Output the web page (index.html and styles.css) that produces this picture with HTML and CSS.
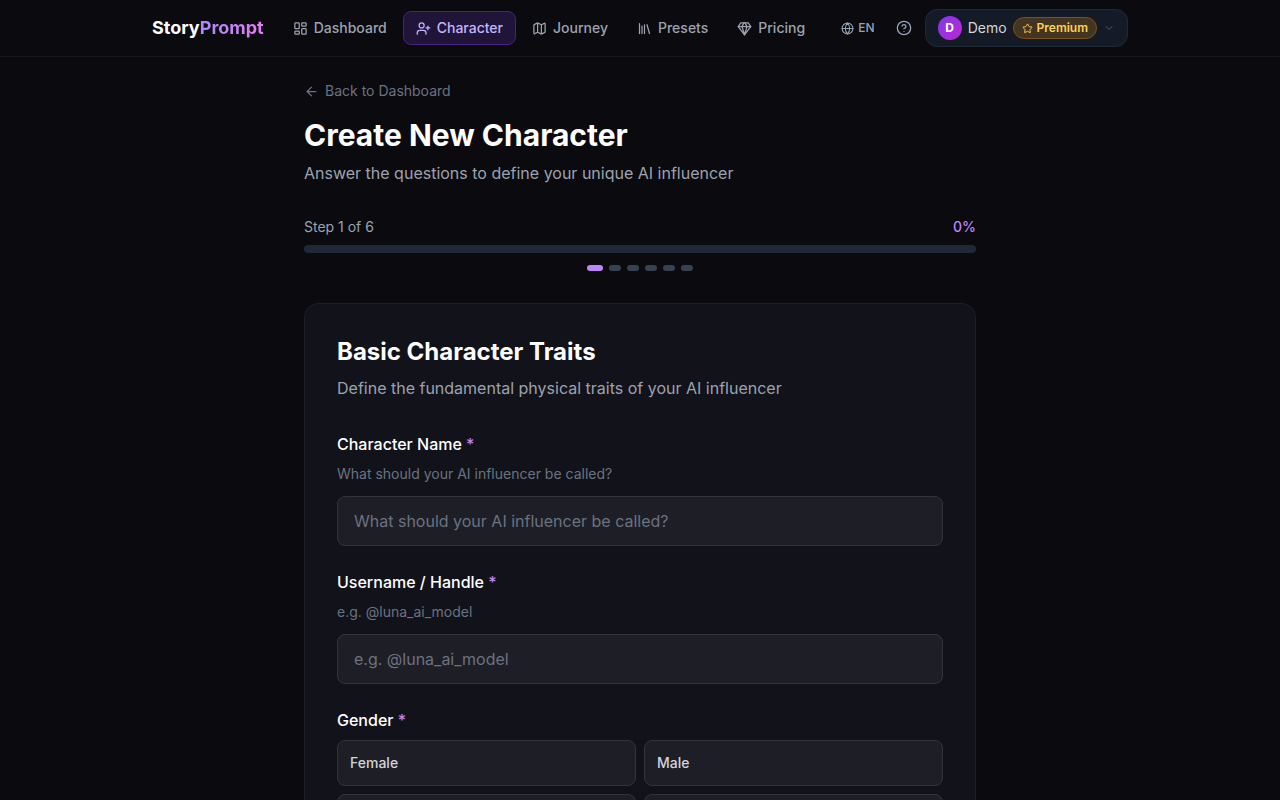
FILE: index.html
```
<!DOCTYPE html>
<html lang="en">

<head>
  <meta charset="UTF-8">
  <meta name="viewport" content="width=device-width, initial-scale=1.0">
  <title>Create New Character - StoryPrompt</title>
  <link rel="stylesheet" href="styles.css">
</head>

<body>
  <header class="topbar">
    <div class="topbar-inner">
      <a class="logo" href="#">Story<span>Prompt</span></a>

      <nav class="nav">
        <a class="nav-link" href="#">
          <svg class="icon" viewBox="0 0 24 24"><rect width="7" height="9" x="3" y="3" rx="1"/><rect width="7" height="5" x="14" y="3" rx="1"/><rect width="7" height="9" x="14" y="12" rx="1"/><rect width="7" height="5" x="3" y="16" rx="1"/></svg>
          Dashboard
        </a>
        <a class="nav-link active" href="#">
          <svg class="icon" viewBox="0 0 24 24"><path d="M16 21v-2a4 4 0 0 0-4-4H6a4 4 0 0 0-4 4v2"/><circle cx="9" cy="7" r="4"/><path d="M19 8v6M22 11h-6"/></svg>
          Character
        </a>
        <a class="nav-link" href="#">
          <svg class="icon" viewBox="0 0 24 24"><path d="M14.106 5.553a2 2 0 0 0 1.788 0l3.659-1.83A1 1 0 0 1 21 4.619v12.764a1 1 0 0 1-.553.894l-4.553 2.277a2 2 0 0 1-1.788 0l-4.212-2.106a2 2 0 0 0-1.788 0l-3.659 1.83A1 1 0 0 1 3 19.381V6.618a1 1 0 0 1 .553-.894l4.553-2.277a2 2 0 0 1 1.788 0zM15 5.764v15M9 3.236v15"/></svg>
          Journey
        </a>
        <a class="nav-link" href="#">
          <svg class="icon" viewBox="0 0 24 24"><path d="m16 6 4 14M12 6v14M8 8v12M4 4v16"/></svg>
          Presets
        </a>
        <a class="nav-link" href="#">
          <svg class="icon" viewBox="0 0 24 24"><path d="M6 3h12l4 6-10 13L2 9Z"/><path d="M11 3 8 9l4 13 4-13-3-6M2 9h20"/></svg>
          Pricing
        </a>
      </nav>

      <div class="tools">
        <button class="lang" type="button">
          <svg class="icon" viewBox="0 0 24 24"><circle cx="12" cy="12" r="10"/><path d="M12 2a14.5 14.5 0 0 0 0 20 14.5 14.5 0 0 0 0-20M2 12h20"/></svg>
          EN
        </button>
        <button class="help" type="button" aria-label="Help">
          <svg class="icon" viewBox="0 0 24 24"><circle cx="12" cy="12" r="10"/><path d="M9.09 9a3 3 0 0 1 5.83 1c0 2-3 3-3 3M12 17h.01"/></svg>
        </button>
        <button class="account" type="button">
          <span class="avatar">D</span>
          <span>Demo</span>
          <span class="badge">
            <svg class="icon" viewBox="0 0 24 24"><path d="M11.525 2.295a.53.53 0 0 1 .95 0l2.31 4.679a2.12 2.12 0 0 0 1.595 1.16l5.166.756a.53.53 0 0 1 .294.904l-3.736 3.638a2.12 2.12 0 0 0-.611 1.878l.882 5.14a.53.53 0 0 1-.771.56l-4.618-2.428a2.12 2.12 0 0 0-1.973 0L6.396 21.01a.53.53 0 0 1-.77-.56l.881-5.139a2.12 2.12 0 0 0-.611-1.879L2.16 9.795a.53.53 0 0 1 .294-.906l5.165-.755a2.12 2.12 0 0 0 1.597-1.16z"/></svg>
            Premium
          </span>
          <svg class="icon chevron" viewBox="0 0 24 24"><path d="m6 9 6 6 6-6"/></svg>
        </button>
      </div>
    </div>
  </header>

  <main class="page">
    <a class="back" href="#">
      <svg class="icon" viewBox="0 0 24 24"><path d="m12 19-7-7 7-7M19 12H5"/></svg>
      Back to Dashboard
    </a>
    <h1>Create New Character</h1>
    <p class="lead">Answer the questions to define your unique AI influencer</p>

    <div class="progress-head">
      <span id="step">Step 1 of 6</span>
      <span class="percent">0%</span>
    </div>
    <div class="progress" role="progressbar" aria-labelledby="step" aria-valuemin="0" aria-valuemax="100" aria-valuenow="0">
      <div class="progress-fill" style="width: 0%"></div>
    </div>
    <div class="steps">
      <span class="current"></span>
      <span></span>
      <span></span>
      <span></span>
      <span></span>
      <span></span>
    </div>

    <form class="card">
      <h2>Basic Character Traits</h2>
      <p class="lead">Define the fundamental physical traits of your AI influencer</p>

      <div class="field">
        <label for="name">Character Name <span class="required">*</span></label>
        <p class="hint" id="name-hint">What should your AI influencer be called?</p>
        <input id="name" type="text" placeholder="What should your AI influencer be called?" aria-describedby="name-hint">
      </div>

      <div class="field">
        <label for="handle">Username / Handle <span class="required">*</span></label>
        <p class="hint" id="handle-hint">e.g. @luna_ai_model</p>
        <input id="handle" type="text" placeholder="e.g. @luna_ai_model" aria-describedby="handle-hint">
      </div>

      <div class="field" role="group" aria-labelledby="gender">
        <div class="group-label" id="gender">Gender <span class="required">*</span></div>
        <div class="options">
          <button type="button">Female</button>
          <button type="button">Male</button>
          <button type="button">Non-binary</button>
          <button type="button">Other</button>
        </div>
      </div>
    </form>
  </main>
</body>

</html>
```
FILE: styles.css
```
* {
  box-sizing: border-box;
}

body {
  margin: 0;
  color: #fff;
  background: #0a0a0f;
  font: 16px/24px Inter, sans-serif;
}

h1,
h2,
p {
  margin: 0;
}

a {
  text-decoration: none;
}

button,
input {
  font: inherit;
}

button {
  cursor: pointer;
}

.icon {
  flex: none;
  width: 15px;
  height: 15px;
  fill: none;
  stroke: currentColor;
  stroke-width: 2;
  stroke-linecap: round;
  stroke-linejoin: round;
}

/* top bar */

.topbar {
  border-bottom: 1px solid #17171c;
}

.topbar-inner {
  display: flex;
  align-items: center;
  max-width: 1024px;
  height: 56px;
  margin: 0 auto;
  padding: 0 24px;
}

.logo {
  margin-right: 16px;
  color: #fff;
  font-size: 18px;
  font-weight: 700;
  line-height: 28px;
}

.logo span {
  color: transparent;
  background: linear-gradient(90deg, #a78bfa, #e879f9);
  background-clip: text;
  -webkit-background-clip: text;
}

.nav {
  display: flex;
  gap: 3px;
}

.nav-link {
  display: flex;
  align-items: center;
  gap: 6px;
  padding: 6px 12px;
  border: 1px solid transparent;
  border-radius: 8px;
  color: #9ca3af;
  font-size: 14px;
  font-weight: 500;
  line-height: 20px;
}

.nav-link.active {
  color: #c4b5fd;
  background: #201438;
  border-color: #4a1f87;
}

.tools {
  display: flex;
  align-items: center;
  gap: 5px;
  margin-left: auto;
}

.lang,
.help {
  display: flex;
  align-items: center;
  gap: 4px;
  padding: 6px 8px;
  border: 0;
  color: #94a3b8;
  background: none;
  font-size: 12px;
  font-weight: 500;
  line-height: 16px;
}

.lang .icon {
  width: 13px;
  height: 13px;
}

.help .icon {
  width: 16px;
  height: 16px;
}

.account {
  display: flex;
  align-items: center;
  gap: 6px;
  padding: 6px 12px;
  border: 1px solid #1e2938;
  border-radius: 12px;
  color: #d1d5dc;
  background: #151b26;
  font-size: 14px;
  line-height: 20px;
}

.avatar {
  width: 24px;
  height: 24px;
  border-radius: 50%;
  color: #fff;
  background: linear-gradient(135deg, #7c3aed, #c026d3);
  font-size: 12px;
  font-weight: 700;
  line-height: 24px;
  text-align: center;
}

.badge {
  display: flex;
  align-items: center;
  gap: 4px;
  padding: 2px 8px;
  border: 1px solid #7c5310;
  border-radius: 99px;
  color: #fcd34d;
  background: #443522;
  font-size: 12px;
  font-weight: 600;
  line-height: 16px;
}

.badge .icon {
  width: 11px;
  height: 11px;
}

.chevron {
  width: 12px;
  height: 12px;
  color: #4a5565;
}

/* page */

.page {
  max-width: 720px;
  margin: 0 auto;
  padding: 24px;
}

.back {
  display: flex;
  align-items: center;
  gap: 6px;
  width: fit-content;
  margin-bottom: 16px;
  color: #6b7280;
  font-size: 14px;
  line-height: 20px;
}

h1 {
  margin-bottom: 8px;
  font-size: 30px;
  font-weight: 700;
  line-height: 36px;
}

.lead {
  color: #9ca3af;
}

.progress-head {
  display: flex;
  justify-content: space-between;
  margin: 32px 0 8px;
  color: #9ca3af;
  font-size: 14px;
  line-height: 20px;
}

.percent {
  color: #c084fc;
  font-weight: 500;
}

.progress {
  height: 8px;
  border-radius: 4px;
  background: #1f2937;
  overflow: hidden;
}

.progress-fill {
  height: 100%;
  background: #c084fc;
}

.steps {
  display: flex;
  justify-content: center;
  gap: 6px;
  margin: 12px 0 32px;
}

.steps span {
  width: 12px;
  height: 6px;
  border-radius: 3px;
  background: #374151;
}

.steps .current {
  width: 16px;
  background: #c084fc;
}

/* form card */

.card {
  padding: 32px;
  border: 1px solid #1e1e29;
  border-radius: 14px;
  background: #12121a;
}

h2 {
  margin-bottom: 8px;
  font-size: 24px;
  font-weight: 700;
  line-height: 32px;
}

.card .lead {
  margin-bottom: 32px;
}

.field {
  margin-bottom: 24px;
}

.field label,
.group-label {
  display: block;
  margin-bottom: 8px;
  font-weight: 500;
}

.required {
  color: #c084fc;
}

.hint {
  margin-bottom: 12px;
  color: #6b7280;
  font-size: 14px;
  line-height: 20px;
}

.field input {
  display: block;
  width: 100%;
  height: 50px;
  padding: 12px 16px;
  border: 1px solid #333338;
  border-radius: 8px;
  color: #fff;
  background: #1e1e26;
}

.field input::placeholder {
  color: #6b7280;
}

.options {
  display: grid;
  grid-template-columns: 1fr 1fr;
  gap: 8px;
}

.options button {
  padding: 12px;
  border: 1px solid #333338;
  border-radius: 8px;
  color: #d1d5db;
  background: #1e1e26;
  font-size: 14px;
  font-weight: 500;
  line-height: 20px;
  text-align: left;
}
```
